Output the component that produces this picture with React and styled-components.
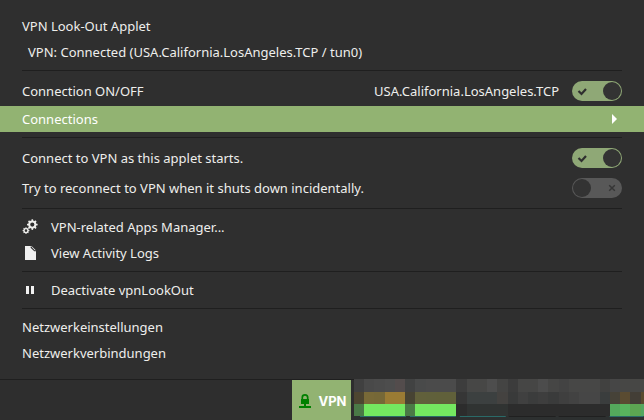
import React from "react";
import styled, { createGlobalStyle } from "styled-components";

const Global = createGlobalStyle`
  * { box-sizing: border-box; }
  body {
    margin: 0;
    background: #2f2f2f;
    color: #eeeeec;
    font-family: "Noto Sans", "Open Sans", sans-serif;
    font-size: 13px;
    line-height: 18px;
  }
  #root { min-height: 100vh; display: flex; flex-direction: column; }
`;

const Screen = styled.div`
  flex: 1;
  display: flex;
  flex-direction: column;
`;

const Menu = styled.main`
  flex: 1;
  padding: 13px 0;
`;

const Label = styled.div`
  height: 26px;
  padding: 4px 22px;
  padding-left: ${(p) => (p.$indent ? 28 : 22)}px;
  white-space: nowrap;
`;

const Separator = styled.hr`
  height: 1px;
  margin: 5px 22px;
  border: 0;
  background: #1f1f1f;
`;

const MenuButton = styled.button`
  display: flex;
  align-items: center;
  width: 100%;
  height: 26px;
  padding: 0 22px;
  border: 0;
  background: ${(p) => (p.$active ? "#92b372" : "transparent")};
  color: ${(p) => (p.$active ? "#ffffff" : "inherit")};
  font: inherit;
  text-align: left;
  white-space: nowrap;
`;

const IconSlot = styled.span`
  display: flex;
  width: 16px;
  height: 16px;
  margin-right: 13px;
`;

const Arrow = styled.svg`
  width: 16px;
  height: 16px;
  margin-left: auto;
`;

const SwitchRow = styled.label`
  display: flex;
  align-items: center;
  height: 30px;
  padding: 0 22px;
  white-space: nowrap;
`;

const Grow = styled.span`
  flex: 1;
`;

const SwitchBox = styled.span`
  display: grid;
  width: 50px;
  height: 20px;
  margin-left: 13px;
  & > * { grid-area: 1 / 1; }
`;

const SwitchInput = styled.input`
  appearance: none;
  width: 50px;
  height: 20px;
  margin: 0;
  border-radius: 10px;
  background: #585858;
  &:checked { background: #8fa876; }
`;

const SwitchArt = styled.svg`
  width: 50px;
  height: 20px;
  pointer-events: none;
`;

const Panel = styled.footer`
  display: flex;
  height: 41px;
  background: linear-gradient(#1f1f1f 1px, #2e2e2e 1px);
`;

const Tray = styled.div`
  flex: 352 1 0;
  display: flex;
  justify-content: flex-end;
  padding: 1px 3px 0 0;
`;

const AppletButton = styled.button`
  display: flex;
  align-items: center;
  gap: 5px;
  width: 59px;
  padding: 2px 0 0 5px;
  border: 0;
  background: #92b372;
  color: #ffffff;
  font: inherit;
  font-family: Inter, "Noto Sans", sans-serif;
  font-weight: 700;
`;

const Mosaic = styled.svg`
  flex: 290 1 0;
  min-width: 0;
  height: 41px;
`;

function Switch({ text, detail, on }) {
  return (
    <SwitchRow>
      <Grow>{text}</Grow>
      {detail}
      <SwitchBox>
        <SwitchInput type="checkbox" role="switch" defaultChecked={on} />
        <SwitchArt viewBox="0 0 50 20" aria-hidden="true">
          <circle cx={on ? 40 : 10} cy="10" r="9" fill="#333333" />
          {on ? (
            <path d="M6.5 10 L9.5 13 L14 8" fill="none" stroke="#2f2f2f" strokeWidth="2.2" />
          ) : (
            <path d="M37.2 7.2 L42.8 12.8 M42.8 7.2 L37.2 12.8" stroke="#363636" strokeWidth="1.5" />
          )}
        </SwitchArt>
      </SwitchBox>
    </SwitchRow>
  );
}

const Teeth = ({ cx, cy, r, len, width, count }) =>
  Array.from({ length: count }, (_, i) => (
    <rect
      key={i}
      x={cx - width / 2}
      y={cy - r - len}
      width={width}
      height={len + 0.6}
      transform={`rotate(${(360 / count) * i} ${cx} ${cy})`}
    />
  ));

const Gears = () => (
  <svg width="16" height="16" viewBox="0 0 16 16" fill="#eeeeec" aria-hidden="true">
    <circle cx="10.3" cy="5.6" r="3.1" fill="none" stroke="#eeeeec" strokeWidth="2" />
    <Teeth cx={10.3} cy={5.6} r={3.9} len={1.4} width={1.6} count={8} />
    <circle cx="4" cy="11.6" r="2" fill="none" stroke="#eeeeec" strokeWidth="1.4" />
    <Teeth cx={4} cy={11.6} r={2.5} len={0.9} width={1} count={8} />
  </svg>
);

const Page = () => (
  <svg width="16" height="16" viewBox="0 0 16 16" aria-hidden="true">
    <path d="M3 1 H9.5 L14 5.5 V15 H3 Z" fill="#f0f0f0" />
    <path d="M9.2 1.5 V2.5 L12.5 5.8 H14" fill="none" stroke="#2f2f2f" strokeWidth="1.1" />
  </svg>
);

const Pause = () => (
  <svg width="16" height="16" viewBox="0 0 16 16" fill="#f2f2f2" aria-hidden="true">
    <path d="M4 4 H7 V12 H4 Z M9 4 H12 V12 H9 Z" />
  </svg>
);

const Lock = () => (
  <svg width="16" height="16" viewBox="0 0 16 16" aria-hidden="true">
    <path d="M5.3 6.5 V4.5 Q5.3 1.8 8 1.8 T10.7 4.5 V6.5" fill="none" stroke="#008000" strokeWidth="1.7" />
    <path d="M4 6 H12 V11 H9 V13 H14 V15 H2 V13 H7 V11 H4 Z" fill="#008000" />
  </svg>
);

const bands = [
  {
    y: 0,
    h: 13,
    colors: "404040 494949 4b4b4b 4d4d4d 534c4c 414242 494a4a 4b4b4b 4b4b4b 4b4b4b 3d3d3d 474746 474746 4d4d4d 444443 3c3c3c 464645 464645 4c4c4c 464645 434343 474746 474746 474746 414140 464646 474745 474745 474745",
  },
  {
    y: 13,
    h: 12,
    colors: "4d4530 786937 766837 9a7b34 9a7b34 474333 61603b 60603b 60603a 60603a 363636 3c4040 3c4040 3c4040 444240 393a3a 404040 3b3c3c 3e3e3e 3a3b3b 3f3f3f 424242 464646 464646 3a3d3d 464238 5a4b31 433e36 594a2e",
  },
  {
    y: 25,
    h: 12,
    colors: "4a7946 74e760 74e760 74e760 74e760 4a7946 74e760 74e760 74e760 74e760 2c2c2c 303332 303332 303332 303332 2c2c2c 2c2c2c 2c2c2c 2c2c2c 2c2c2c 2c2c2c 2c2c2c 2c2c2c 2c2c2c 2c2c2c 54a85c 58b45e 5ca552 54a660",
  },
];

function PixelStrip() {
  return (
    <Mosaic viewBox="0 0 290 41" preserveAspectRatio="none" shapeRendering="crispEdges" aria-hidden="true">
      <rect width="290" height="41" fill="#2d3030" />
      {bands.map((band) =>
        band.colors.split(" ").map((color, i) => (
          <rect key={`${band.y}-${i}`} x={i * 10.25} y={band.y} width="10.5" height={band.h} fill={`#${color}`} />
        ))
      )}
      <path d="M6 37.5 H52 M56 37.5 H102 M106 37.5 H152 M256 37.5 H290" stroke="#2a6a68" />
      <path d="M155 37.5 H202 M205 37.5 H252" stroke="#202020" />
    </Mosaic>
  );
}

export default function App() {
  return (
    <>
      <Global />
      <Screen>
        <Menu>
          <Label>VPN Look-Out Applet</Label>
          <Label $indent>VPN: Connected (USA.California.LosAngeles.TCP / tun0)</Label>
          <Separator />
          <Switch text="Connection ON/OFF" detail="USA.California.LosAngeles.TCP" on />
          <MenuButton $active>
            Connections
            <Arrow viewBox="0 0 16 16" aria-hidden="true">
              <path d="M6 3 L11 8 L6 13 Z" fill="#ffffff" />
            </Arrow>
          </MenuButton>
          <Separator />
          <Switch text="Connect to VPN as this applet starts." on />
          <Switch text="Try to reconnect to VPN when it shuts down incidentally." />
          <Separator />
          <MenuButton>
            <IconSlot><Gears /></IconSlot>
            VPN-related Apps Manager...
          </MenuButton>
          <MenuButton>
            <IconSlot><Page /></IconSlot>
            View Activity Logs
          </MenuButton>
          <Separator />
          <MenuButton>
            <IconSlot><Pause /></IconSlot>
            Deactivate vpnLookOut
          </MenuButton>
          <Separator />
          <MenuButton>Netzwerkeinstellungen</MenuButton>
          <MenuButton>Netzwerkverbindungen</MenuButton>
        </Menu>
        <Panel>
          <Tray>
            <AppletButton>
              <Lock />
              VPN
            </AppletButton>
          </Tray>
          <PixelStrip />
        </Panel>
      </Screen>
    </>
  );
}
